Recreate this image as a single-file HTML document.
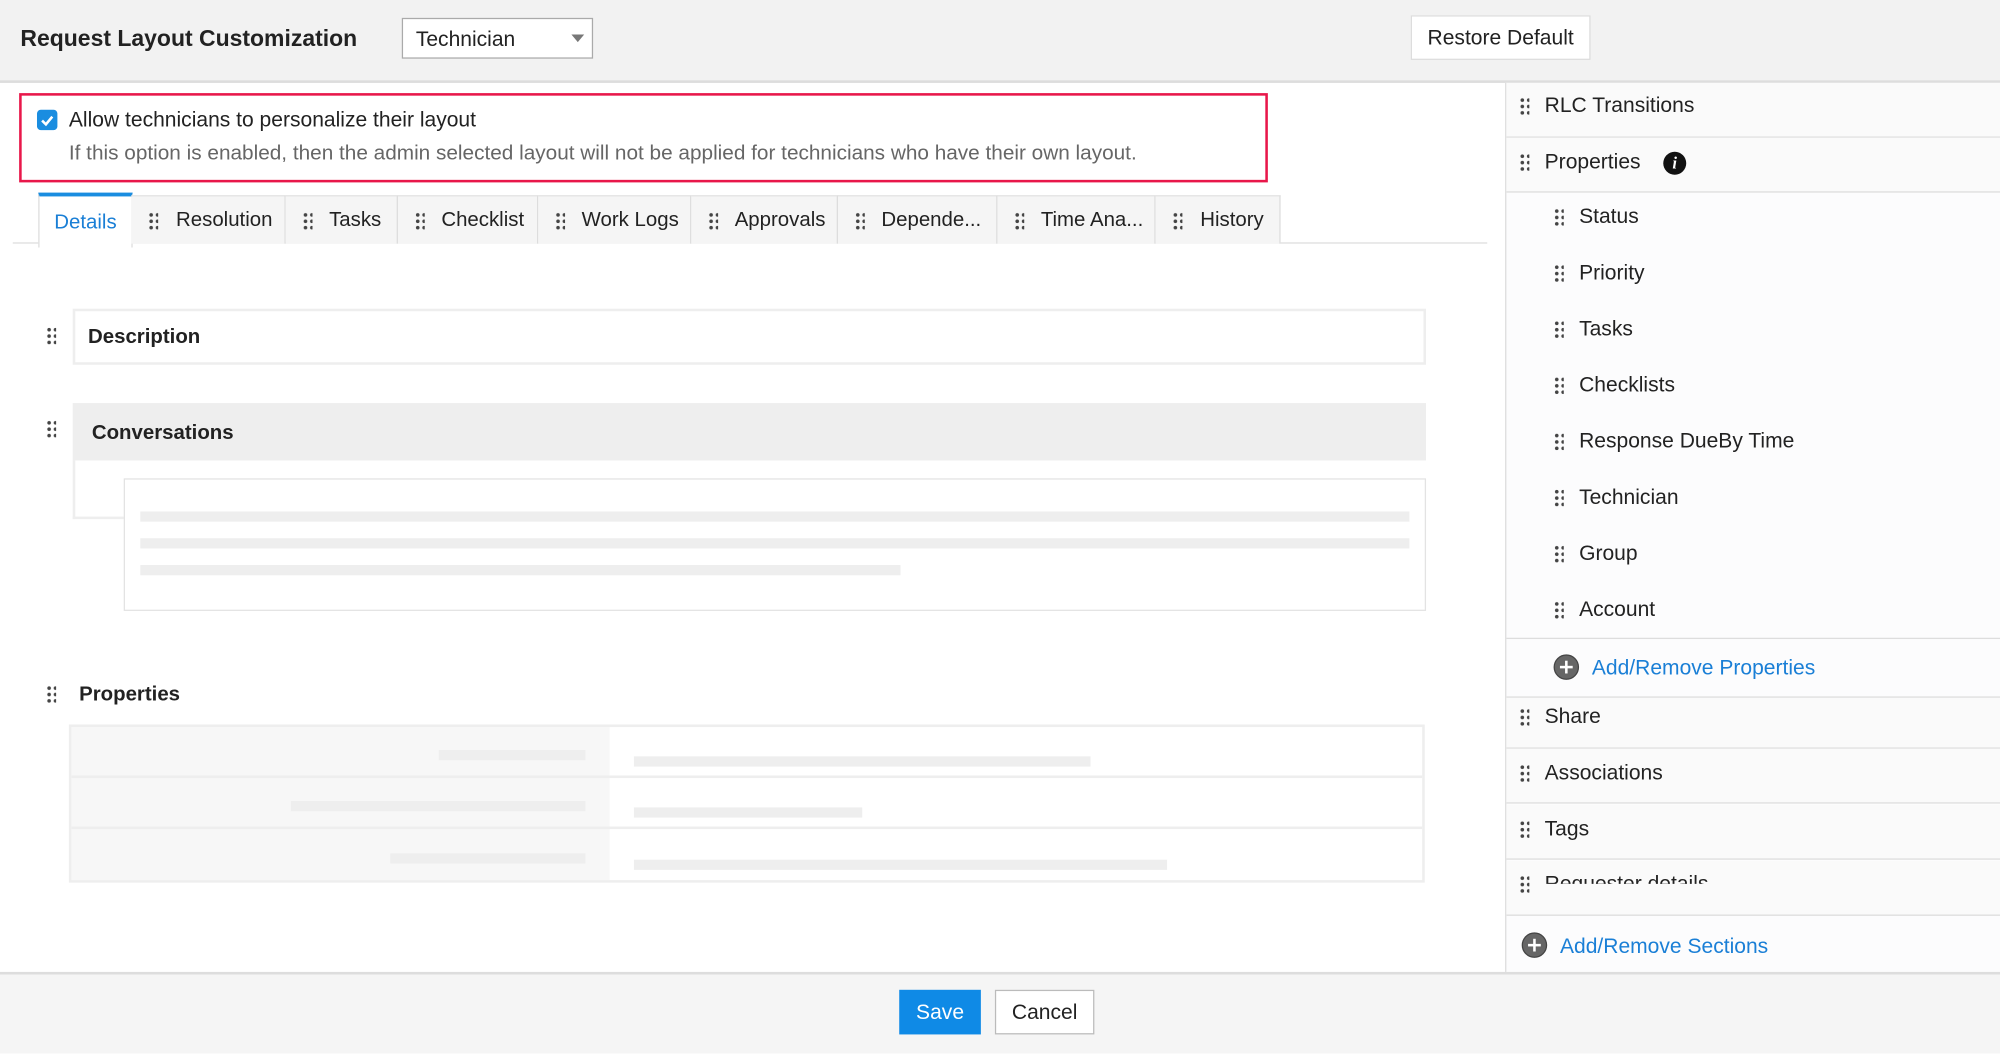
<!DOCTYPE html>
<html><head><meta charset="utf-8"><style>
html,body{margin:0;padding:0;width:2000px;height:1051px;overflow:hidden;background:#fff}
#w{position:absolute;left:0;top:0;width:1568px;height:824px;transform:scale(1.27551);transform-origin:0 0;font-family:"Liberation Sans",sans-serif;color:#222;font-size:16.5px;line-height:22px}
.a{position:absolute}
.d{position:absolute;width:8px;height:14px;background-image:radial-gradient(circle,#444 1.3px,transparent 1.6px);background-size:5px 5px;background-position:0 0}
.tab{position:absolute;top:153px;height:37px;background:#f5f5f5;border-right:1px solid #ddd;border-top:1px solid #e2e2e2;line-height:37px;font-size:16px}
.bar{position:absolute;height:8px;background:#eee}
.ri{position:absolute;left:1181px;right:0;border-bottom:1px solid #ddd;background:#fafafa}
.sub{position:absolute;left:1238px}
.plus{position:absolute;width:20px;height:20px;border-radius:50%;background:#666;border:1px solid #444;box-sizing:border-box}
.plus:before{content:"";position:absolute;left:4px;top:8px;width:10px;height:2px;background:#fff}
.plus:after{content:"";position:absolute;left:8px;top:4px;width:2px;height:10px;background:#fff}
</style></head><body><div id="w">
<div class="a" style="left:0;top:0;width:1568px;height:63px;background:#f2f2f2;border-bottom:2px solid #ddd"></div>
<div class="a" style="left:16px;top:19px;font-weight:bold;font-size:18px">Request Layout Customization</div>
<div class="a" style="left:315px;top:14px;width:148px;height:30px;border:1px solid #aaa;background:#fff;box-sizing:content-box"><span class="a" style="left:10px;top:5px">Technician</span><span class="a" style="right:6px;top:12px;border-left:5px solid transparent;border-right:5px solid transparent;border-top:6px solid #777"></span></div>
<div class="a" style="left:1106px;top:12px;width:139px;height:33px;background:#fff;border:1px solid #ddd;line-height:34px;text-align:center">Restore Default</div>

<div class="a" style="left:1180px;top:65px;width:388px;height:698px;background:#fcfcfd;border-left:1px solid #ddd"></div>
<div class="ri" style="top:65px;height:42px"></div>
<div class="d" style="left:1191px;top:76px"></div><div class="a" style="left:1211px;top:72px">RLC Transitions</div>
<div class="ri" style="top:108px;height:42px"></div>
<div class="d" style="left:1191px;top:120px"></div><div class="a" style="left:1211px;top:116px">Properties</div>
<div class="a" style="left:1304px;top:119px;width:18px;height:18px;border-radius:50%;background:#111;color:#fff;font:italic bold 13px 'Liberation Serif',serif;text-align:center;line-height:18px">i</div>
<div class="d" style="left:1218px;top:163px"></div><div class="sub" style="top:159px">Status</div>
<div class="d" style="left:1218px;top:207px"></div><div class="sub" style="top:203px">Priority</div>
<div class="d" style="left:1218px;top:251px"></div><div class="sub" style="top:247px">Tasks</div>
<div class="d" style="left:1218px;top:295px"></div><div class="sub" style="top:291px">Checklists</div>
<div class="d" style="left:1218px;top:339px"></div><div class="sub" style="top:335px">Response DueBy Time</div>
<div class="d" style="left:1218px;top:383px"></div><div class="sub" style="top:379px">Technician</div>
<div class="d" style="left:1218px;top:427px"></div><div class="sub" style="top:423px">Group</div>
<div class="d" style="left:1218px;top:471px"></div><div class="sub" style="top:467px">Account</div>
<div class="a" style="left:1181px;right:0;top:500px;border-top:1px solid #ddd"></div>
<div class="plus" style="left:1218px;top:513px"></div><div class="a" style="left:1248px;top:513px;color:#1a7fd6">Add/Remove Properties</div>
<div class="ri" style="top:546px;height:39px;border-top:1px solid #ddd"></div>
<div class="d" style="left:1191px;top:555px"></div><div class="a" style="left:1211px;top:551px">Share</div>
<div class="ri" style="top:587px;height:42px"></div>
<div class="d" style="left:1191px;top:599px"></div><div class="a" style="left:1211px;top:595px">Associations</div>
<div class="ri" style="top:631px;height:42px"></div>
<div class="d" style="left:1191px;top:643px"></div><div class="a" style="left:1211px;top:639px">Tags</div>
<div class="ri" style="top:675px;height:42px;overflow:hidden"><div class="d" style="left:10px;top:11px"></div><div class="a" style="left:30px;top:8px;height:10px;overflow:hidden;line-height:20px">Requester details</div></div>
<div class="plus" style="left:1193px;top:731px"></div><div class="a" style="left:1223px;top:731px;color:#1a7fd6">Add/Remove Sections</div>

<div class="a" style="left:15px;top:73px;width:975px;height:66px;border:2px solid #e8174a"></div>
<div class="a" style="left:29px;top:86px;width:16px;height:16px;border-radius:3px;background:#1a8de0"><svg width="16" height="16"><path d="M4 8.5l3 3 5-6" stroke="#fff" stroke-width="2" fill="none"/></svg></div>
<div class="a" style="left:54px;top:83px">Allow technicians to personalize their layout</div>
<div class="a" style="left:54px;top:109px;color:#666;font-size:16.3px">If this option is enabled, then the admin selected layout will not be applied for technicians who have their own layout.</div>

<div class="a" style="left:10px;top:190px;width:1156px;border-top:1px solid #ddd"></div>
<div class="tab" style="left:30px;width:72px;background:#fff;border-top:3px solid #1a8de0;top:151px;height:40px;border-left:1px solid #ddd;color:#1a7fd6;text-align:center;line-height:42px">Details</div>
<div class="tab" style="left:103px;width:120px"><div class="d" style="left:13px;top:12px"></div><span style="position:absolute;left:35px">Resolution</span></div>
<div class="tab" style="left:224px;width:87px"><div class="d" style="left:13px;top:12px"></div><span style="position:absolute;left:34px">Tasks</span></div>
<div class="tab" style="left:312px;width:109px"><div class="d" style="left:13px;top:12px"></div><span style="position:absolute;left:34px">Checklist</span></div>
<div class="tab" style="left:422px;width:119px"><div class="d" style="left:13px;top:12px"></div><span style="position:absolute;left:34px">Work Logs</span></div>
<div class="tab" style="left:542px;width:114px"><div class="d" style="left:13px;top:12px"></div><span style="position:absolute;left:34px">Approvals</span></div>
<div class="tab" style="left:657px;width:124px"><div class="d" style="left:13px;top:12px"></div><span style="position:absolute;left:34px">Depende...</span></div>
<div class="tab" style="left:782px;width:123px"><div class="d" style="left:13px;top:12px"></div><span style="position:absolute;left:34px">Time Ana...</span></div>
<div class="tab" style="left:906px;width:97px"><div class="d" style="left:13px;top:12px"></div><span style="position:absolute;left:35px">History</span></div>

<div class="d" style="left:36px;top:256px"></div>
<div class="a" style="left:57px;top:242px;width:1057px;height:40px;border:2px solid #eee"></div>
<div class="a" style="left:69px;top:254px;font-weight:bold;font-size:16px">Description</div>
<div class="d" style="left:36px;top:329px"></div>
<div class="a" style="left:57px;top:316px;width:1061px;height:45px;background:#eee"></div>
<div class="a" style="left:72px;top:329px;font-weight:bold;font-size:16px">Conversations</div>
<div class="a" style="left:57px;top:361px;width:40px;height:46px;border-left:2px solid #eee;border-bottom:2px solid #eee;box-sizing:border-box"></div>
<div class="a" style="left:97px;top:375px;width:1019px;height:102px;border:1px solid #e3e3e3"></div>
<div class="bar" style="left:110px;top:401px;width:995px"></div>
<div class="bar" style="left:110px;top:422px;width:995px"></div>
<div class="bar" style="left:110px;top:443px;width:596px"></div>

<div class="d" style="left:36px;top:537px"></div>
<div class="a" style="left:62px;top:534px;font-weight:bold;font-size:16px">Properties</div>
<div class="a" style="left:54px;top:568px;width:1059px;height:120px;border:2px solid #eee;background:#fff"></div>
<div class="a" style="left:56px;top:570px;width:422px;height:120px;background:#f7f7f7"></div>
<div class="a" style="left:56px;top:608px;width:1059px;border-top:2px solid #eee"></div>
<div class="a" style="left:56px;top:648px;width:1059px;border-top:2px solid #eee"></div>
<div class="bar" style="left:344px;top:588px;width:115px"></div>
<div class="bar" style="left:228px;top:628px;width:231px"></div>
<div class="bar" style="left:306px;top:669px;width:153px"></div>
<div class="bar" style="left:497px;top:593px;width:358px"></div>
<div class="bar" style="left:497px;top:633px;width:179px"></div>
<div class="bar" style="left:497px;top:674px;width:418px"></div>

<div class="a" style="left:0;top:762px;width:1568px;height:62px;background:#f5f5f5;border-top:2px solid #ddd"></div>
<div class="a" style="left:705px;top:776px;width:64px;height:35px;background:#0f8ae6;color:#fff;text-align:center;line-height:36px">Save</div>
<div class="a" style="left:780px;top:776px;width:76px;height:33px;background:#fff;border:1px solid #bbb;text-align:center;line-height:35px">Cancel</div>
</div></body></html>
